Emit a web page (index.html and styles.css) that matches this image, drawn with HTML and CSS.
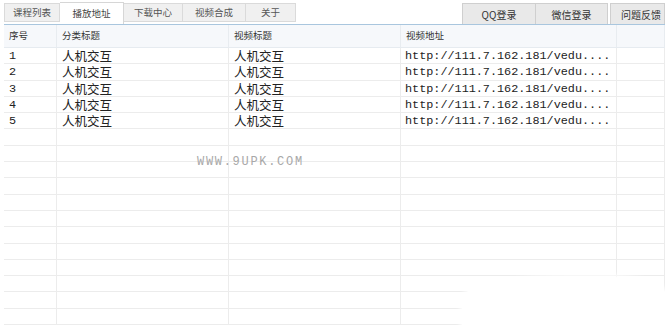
FILE: index.html
```html
<!DOCTYPE html>
<html lang="zh-CN">
<head>
    <meta charset="UTF-8">
    <title>播放地址</title>
    <link rel="stylesheet" href="styles.css">
</head>
<body>
    <div class="toolbar">
        <div class="tabs">
            <div class="tab">课程列表</div>
            <div class="tab active">播放地址</div>
            <div class="tab">下载中心</div>
            <div class="tab">视频合成</div>
            <div class="tab">关于</div>
        </div>
        <div class="actions">
            <button class="action qq">QQ登录</button>
            <button class="action wx">微信登录</button>
            <button class="action fb">问题反馈</button>
        </div>
    </div>

    <div class="grid">
        <div class="row head">
            <div class="cell">序号</div>
            <div class="cell">分类标题</div>
            <div class="cell">视频标题</div>
            <div class="cell">视频地址</div>
            <div class="cell"></div>
        </div>
        <div class="row"><div class="cell num">1</div><div class="cell cn">人机交互</div><div class="cell cn">人机交互</div><div class="cell url">http://111.7.162.181/vedu....</div><div class="cell"></div></div>
        <div class="row"><div class="cell num">2</div><div class="cell cn">人机交互</div><div class="cell cn">人机交互</div><div class="cell url">http://111.7.162.181/vedu....</div><div class="cell"></div></div>
        <div class="row"><div class="cell num">3</div><div class="cell cn">人机交互</div><div class="cell cn">人机交互</div><div class="cell url">http://111.7.162.181/vedu....</div><div class="cell"></div></div>
        <div class="row"><div class="cell num">4</div><div class="cell cn">人机交互</div><div class="cell cn">人机交互</div><div class="cell url">http://111.7.162.181/vedu....</div><div class="cell"></div></div>
        <div class="row"><div class="cell num">5</div><div class="cell cn">人机交互</div><div class="cell cn">人机交互</div><div class="cell url">http://111.7.162.181/vedu....</div><div class="cell"></div></div>
        <div class="row"><div class="cell"></div><div class="cell"></div><div class="cell"></div><div class="cell"></div><div class="cell"></div></div>
        <div class="row"><div class="cell"></div><div class="cell"></div><div class="cell"></div><div class="cell"></div><div class="cell"></div></div>
        <div class="row"><div class="cell"></div><div class="cell"></div><div class="cell"></div><div class="cell"></div><div class="cell"></div></div>
        <div class="row"><div class="cell"></div><div class="cell"></div><div class="cell"></div><div class="cell"></div><div class="cell"></div></div>
        <div class="row"><div class="cell"></div><div class="cell"></div><div class="cell"></div><div class="cell"></div><div class="cell"></div></div>
        <div class="row"><div class="cell"></div><div class="cell"></div><div class="cell"></div><div class="cell"></div><div class="cell"></div></div>
        <div class="row"><div class="cell"></div><div class="cell"></div><div class="cell"></div><div class="cell"></div><div class="cell"></div></div>
        <div class="row"><div class="cell"></div><div class="cell"></div><div class="cell"></div><div class="cell"></div><div class="cell"></div></div>
        <div class="row"><div class="cell"></div><div class="cell"></div><div class="cell"></div><div class="cell"></div><div class="cell"></div></div>
        <div class="row"><div class="cell"></div><div class="cell"></div><div class="cell"></div><div class="cell"></div><div class="cell"></div></div>
        <div class="row"><div class="cell"></div><div class="cell"></div><div class="cell"></div><div class="cell"></div><div class="cell"></div></div>
        <div class="row"><div class="cell"></div><div class="cell"></div><div class="cell"></div><div class="cell"></div><div class="cell"></div></div>
    </div>

    <div class="watermark">WWW.9UPK.COM</div>
    <div class="blot"></div>
</body>
</html>
```

FILE: styles.css
```css
* {
    margin: 0;
    padding: 0;
    box-sizing: border-box;
}

html {
    overflow: hidden;
}

body {
    width: 665px;
    height: 330px;
    overflow: hidden;
    background: #fff;
    font-family: "Noto Sans CJK SC", "Noto Sans", sans-serif;
    color: #333;
    position: relative;
}

.toolbar {
    display: flex;
    justify-content: space-between;
    align-items: flex-end;
    height: 25px;
    margin-left: 4px;
    border-bottom: 1px solid #a9c6de;
}

.tabs {
    display: flex;
    align-items: flex-end;
}

.tab {
    height: 19px;
    margin-bottom: 2px;
    background: #f0f0f0;
    border: 1px solid #dadada;
    border-left: none;
    font-size: 9.5px;
    line-height: 17px;
    color: #555;
    text-align: center;
    white-space: nowrap;
}

.tab:nth-child(1) { width: 56px; border-left: 1px solid #dadada; }
.tab:nth-child(3) { width: 59px; }
.tab:nth-child(4) { width: 63px; }
.tab:nth-child(5) { width: 50px; }

.tab.active {
    width: 64px;
    height: 22px;
    margin-bottom: 0;
    background: #fff;
    border-color: #d6d6d6;
    border-bottom: none;
    line-height: 21px;
    color: #444;
}

.actions {
    display: flex;
}

.action {
    height: 21px;
    background: #e9e9e9;
    border: 1px solid #cfcfcf;
    border-bottom: none;
    border-left: none;
    font-family: "Noto Sans CJK SC", "Noto Sans", sans-serif;
    font-size: 10px;
    color: #333;
    white-space: nowrap;
}

.action.qq { width: 74px; border-left: 1px solid #cfcfcf; }
.action.wx { width: 72px; margin-right: 2px; }
.action.fb { width: 55px; border-left: 1px solid #cfcfcf; text-align: left; padding-left: 10px; }

.grid {
    margin-left: 4px;
    height: 305px;
    overflow: hidden;
}

.row {
    display: grid;
    grid-template-columns: 53px 172px 172px 216px 1fr;
    height: 16.3px;
    border-bottom: 1px solid #ececec;
}

.row.head {
    height: 23px;
    background: #f6f8fb;
    border-bottom: 1px solid #e6ebf0;
}

.cell {
    border-right: 1px solid #ececec;
    padding-left: 5px;
    white-space: nowrap;
}

.row.head .cell {
    border-right-color: #e8ecf0;
    font-size: 9.5px;
    line-height: 21px;
    color: #333;
}

.cell.num,
.cell.url {
    font-family: "Liberation Mono", monospace;
    font-size: 11.8px;
    line-height: 16px;
    color: #222;
}

.cell.url {
    padding-left: 4px;
}

.cell.cn {
    font-size: 12.5px;
    line-height: 15px;
    color: #222;
}

.watermark {
    position: absolute;
    left: 197px;
    top: 155px;
    font-family: "Liberation Mono", monospace;
    font-size: 12px;
    letter-spacing: 1.7px;
    color: #a8a8a8;
}

.blot {
    position: absolute;
    left: 462px;
    top: 277px;
    width: 203px;
    height: 53px;
    background: #fff;
    border-radius: 55% 30% 0 0 / 40% 30% 0 0;
    box-shadow: 0 0 4px 2px #fff;
}
```
